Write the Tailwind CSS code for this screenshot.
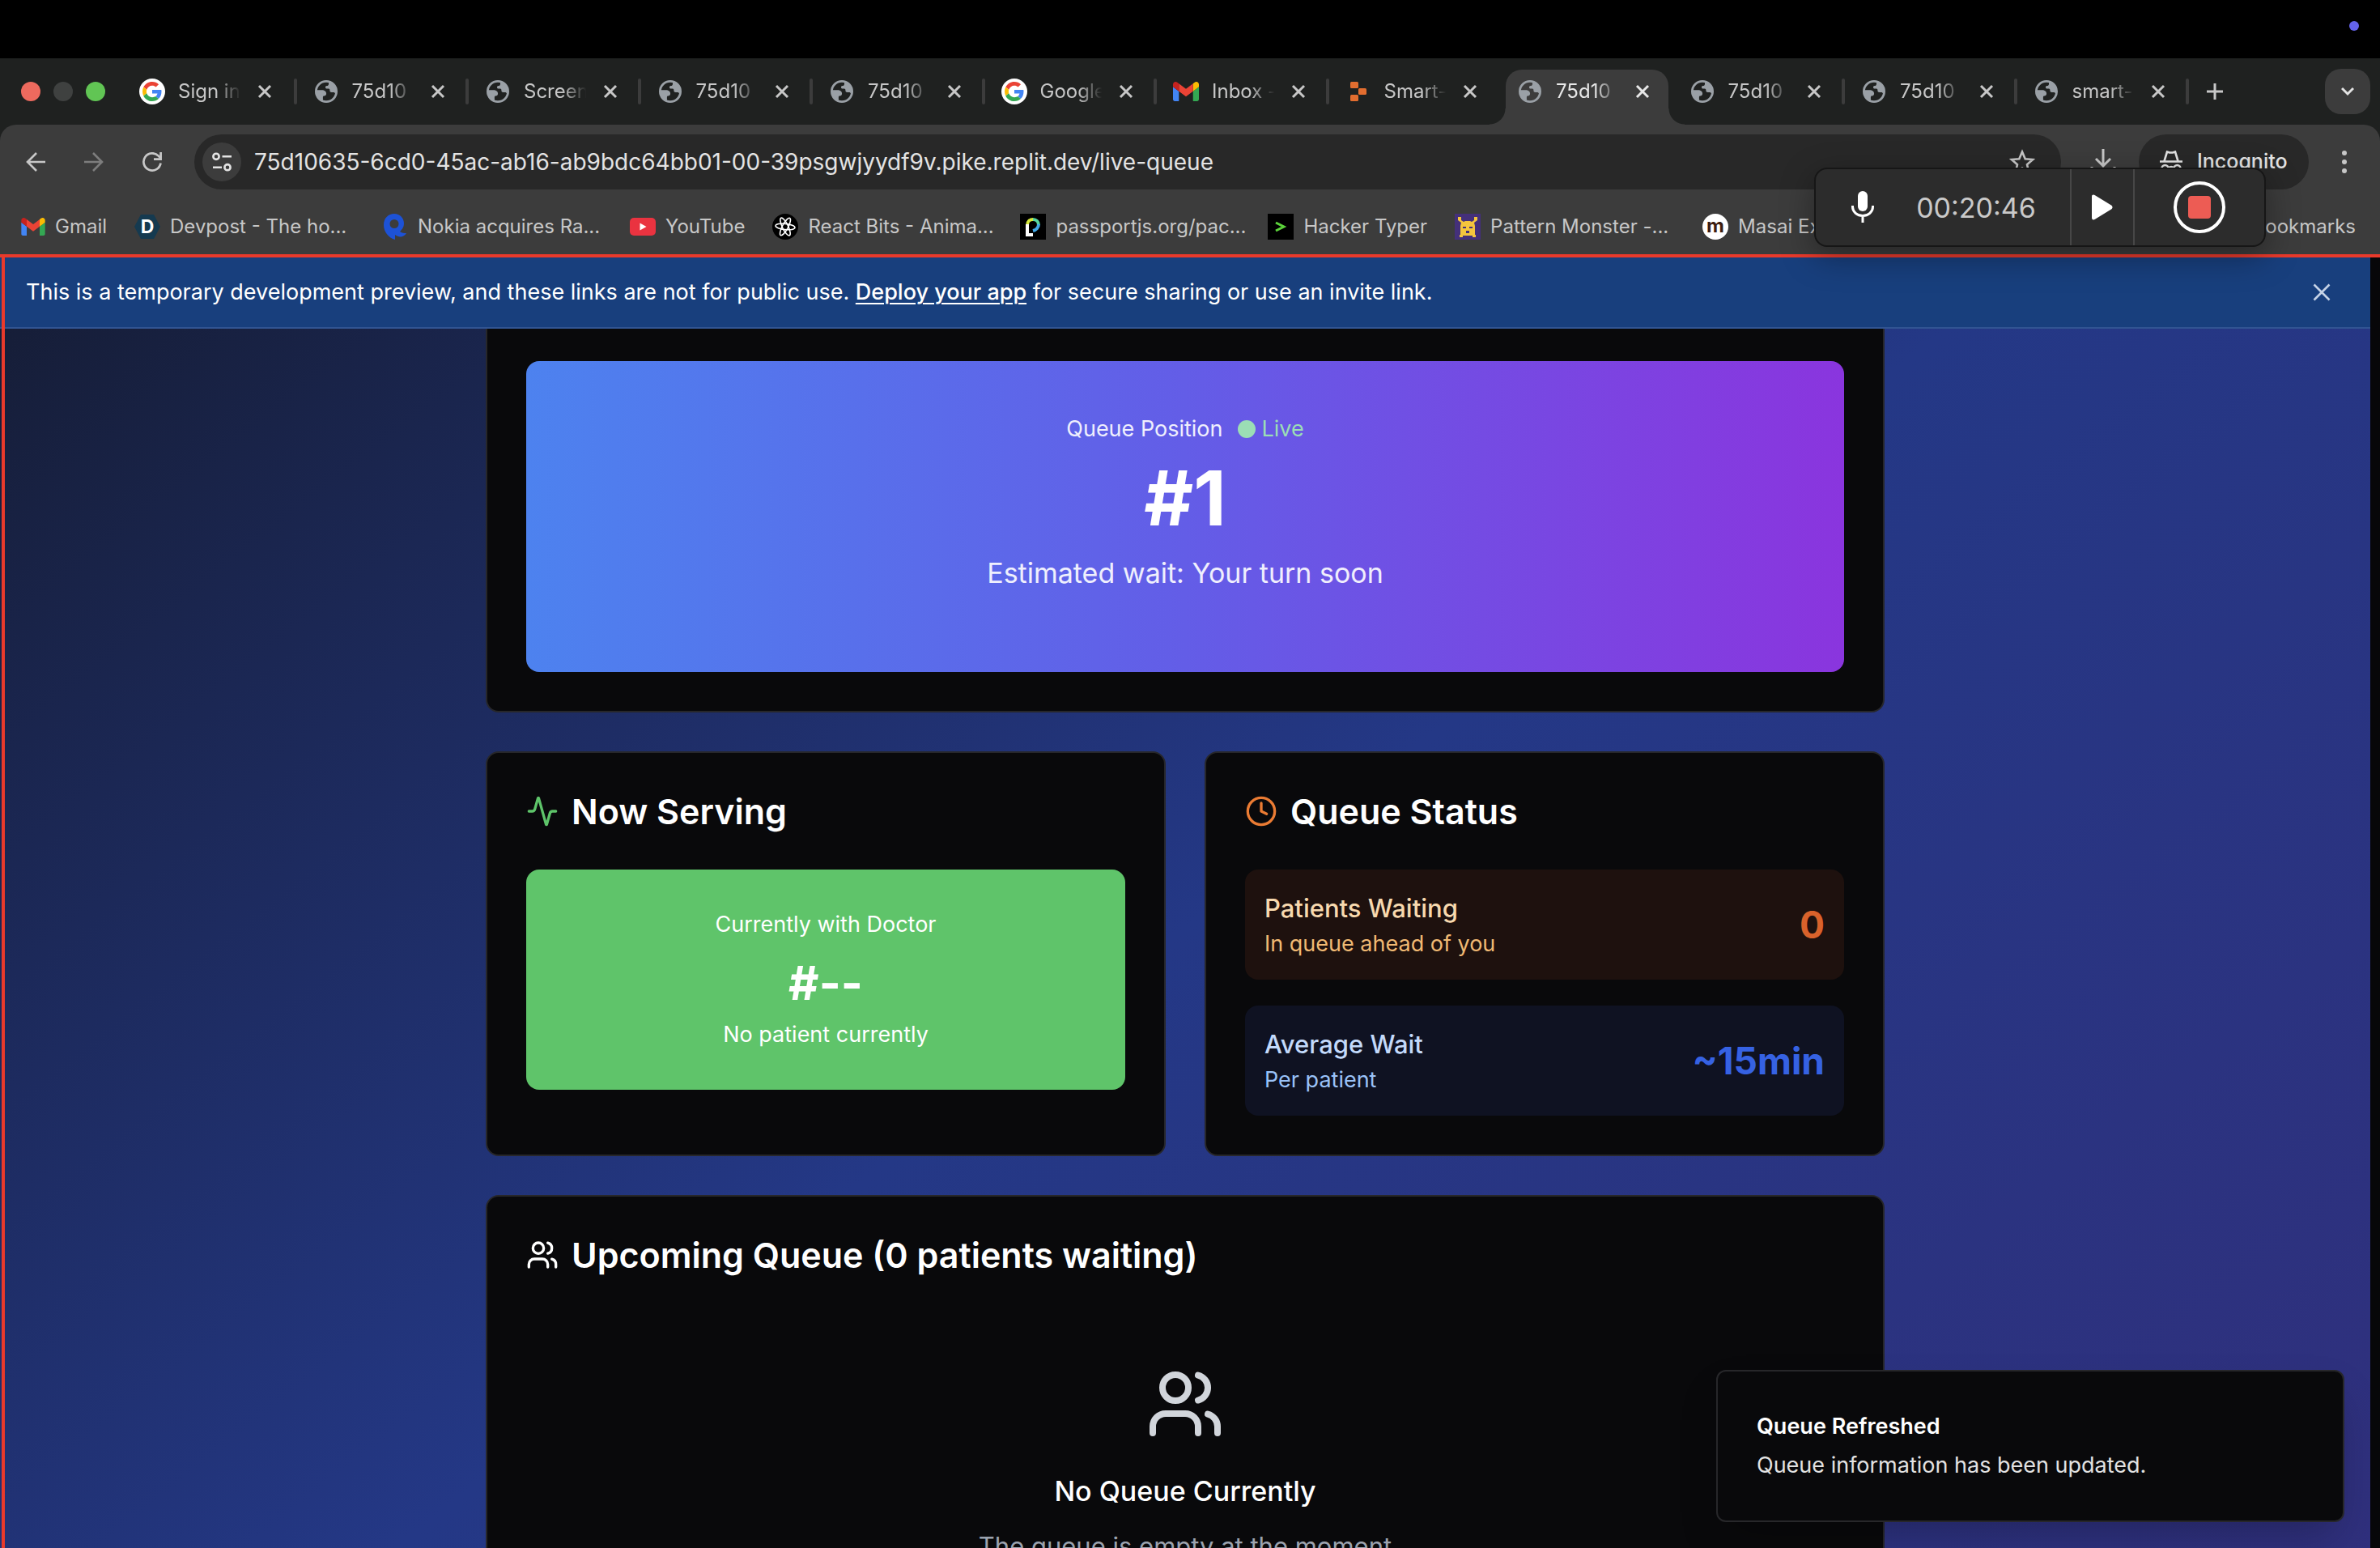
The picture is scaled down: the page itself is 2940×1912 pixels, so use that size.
<!DOCTYPE html>
<html lang="en">
<head>
<meta charset="utf-8">
<meta name="viewport" content="width=device-width, initial-scale=1">
<title>Live Queue</title>
<script src="https://cdn.jsdelivr.net/npm/@tailwindcss/browser@4"></script>
</head>
<body class="flex h-screen flex-col overflow-hidden bg-black font-['Inter','Liberation_Sans',sans-serif] text-white">

<!-- Shared icons -->
<svg class="hidden" aria-hidden="true">
  <symbol id="globe" viewBox="0 0 28 28">
    <circle cx="14" cy="14" r="12.6" fill="none" stroke="#9aa0a6" stroke-width="2.8"/>
    <path fill="#9aa0a6" d="M17 1.5v3.2c0 1.5-1 2.3-2.4 2.3-1.2 0-1.6.8-1.6 2 0 1.4 1 1.6 2.2 1.6h1.6c1.4 0 1.6 1 1.6 2.2 0 1.4.8 2.2 2.2 2.2h2.2c1 0 1.6.4 2 1.2l1.8-1.6C27 8 22.600 2.500 17 1.500z"/>
    <path fill="#9aa0a6" d="M1.500 12.200h7c3.400 0 5.600 1.800 5.600 4.400 0 2-1.200 2.800-2.800 2.800-1 0-1.400.6-1.400 1.600v4.800C4.500 24 1 19 1.500 12.200z"/>
  </symbol>
  <symbol id="google" viewBox="0 0 64 64">
    <circle cx="32" cy="32" r="32" fill="#fff"/>
    <g transform="translate(8 8)">
      <path fill="#ea4335" d="M24 9.500c3.540 0 6.710 1.220 9.210 3.600l6.850-6.850C35.900 2.380 30.470 0 24 0 14.620 0 6.510 5.380 2.560 13.220l7.980 6.190C12.430 13.720 17.740 9.500 24 9.500z"/>
      <path fill="#4285f4" d="M46.980 24.550c0-1.570-.15-3.090-.38-4.550H24v9.020h12.940c-.58 2.960-2.260 5.480-4.780 7.180l7.730 6c4.510-4.180 7.090-10.360 7.090-17.650z"/>
      <path fill="#fbbc05" d="M10.530 28.590c-.48-1.450-.76-2.990-.76-4.590s.27-3.140.76-4.590l-7.980-6.190C.92 16.460 0 20.120 0 24s.92 7.540 2.560 10.780l7.970-6.190z"/>
      <path fill="#34a853" d="M24 48c6.480 0 11.930-2.130 15.890-5.810l-7.730-6c-2.150 1.450-4.920 2.300-8.160 2.300-6.260 0-11.570-4.220-13.470-9.910l-7.980 6.190C6.510 42.620 14.620 48 24 48z"/>
    </g>
  </symbol>
  <symbol id="gmail" viewBox="52 42 88 66">
    <path fill="#4285f4" d="M58 108h14V74L52 59v43c0 3.320 2.690 6 6 6"/>
    <path fill="#34a853" d="M120 108h14c3.320 0 6-2.690 6-6V59l-20 15"/>
    <path fill="#fbbc04" d="M120 48v26l20-15v-8c0-7.420-8.470-11.650-14.400-7.200"/>
    <path fill="#ea4335" d="M72 74V48l24 18 24-18v26L96 92"/>
    <path fill="#c5221f" d="M52 51v8l20 15V48l-5.600-4.200c-5.940-4.450-14.400-.22-14.400 7.200"/>
  </symbol>
  <symbol id="close" viewBox="0 0 24 24">
    <path d="M5 5l14 14M19 5L5 19" fill="none" stroke="currentColor" stroke-width="3"/>
  </symbol>
  <symbol id="users" viewBox="0 0 24 24">
    <g fill="none" stroke="currentColor" stroke-width="2" stroke-linecap="round" stroke-linejoin="round">
      <path d="M16 21v-2a4 4 0 0 0-4-4H6a4 4 0 0 0-4 4v2"/>
      <circle cx="9" cy="7" r="4"/>
      <path d="M22 21v-2a4 4 0 0 0-3-3.870"/>
      <path d="M16 3.130a4 4 0 0 1 0 7.750"/>
    </g>
  </symbol>
</svg>

<!-- Menu bar -->
<div class="flex h-[72px] shrink-0 items-center justify-end bg-black pr-[26px]">
  <span class="mb-2 size-3 rounded-full bg-[#6463ea]"></span>
</div>

<!-- Tab strip -->
<header class="flex h-[82px] shrink-0 bg-[#1f2120] text-[24px] text-[#c7c7c7]">
  <div class="flex w-[152px] shrink-0 items-center gap-4 pl-[26px]">
    <button aria-label="Close window" class="size-6 rounded-full bg-[#ed6a5e]"></button>
    <button aria-label="Minimise window" class="size-6 rounded-full bg-[#3f4140]"></button>
    <button aria-label="Zoom window" class="size-6 rounded-full bg-[#61c554]"></button>
  </div>
  <nav aria-label="Tabs" class="flex min-w-0 flex-1">
    <div class="relative flex min-w-0 flex-1 items-center pr-[26px] pl-5">
      <svg class="size-8 shrink-0"><use href="#google"/></svg>
      <a href="#" class="ml-4 min-w-0 flex-1 overflow-hidden whitespace-nowrap [mask-image:linear-gradient(to_right,black_60%,transparent_98%)]">Sign in</a>
      <button aria-label="Close tab" class="ml-4 shrink-0"><svg class="size-6"><use href="#close"/></svg></button>
      <span class="absolute -right-0.5 h-8 w-1 rounded-full bg-[#3c3c3c]"></span>
    </div>
    <div class="relative flex min-w-0 flex-1 items-center pr-6 pl-[22px]">
      <span class="flex w-8 shrink-0 justify-center"><svg class="size-7"><use href="#globe"/></svg></span>
      <a href="#" class="ml-4 min-w-0 flex-1 overflow-hidden whitespace-nowrap [mask-image:linear-gradient(to_right,black_60%,transparent_98%)]">75d10</a>
      <button aria-label="Close tab" class="ml-4 shrink-0"><svg class="size-6"><use href="#close"/></svg></button>
      <span class="absolute -right-0.5 h-8 w-1 rounded-full bg-[#3c3c3c]"></span>
    </div>
    <div class="relative flex min-w-0 flex-1 items-center pr-6 pl-[22px]">
      <span class="flex w-8 shrink-0 justify-center"><svg class="size-7"><use href="#globe"/></svg></span>
      <a href="#" class="ml-4 min-w-0 flex-1 overflow-hidden whitespace-nowrap [mask-image:linear-gradient(to_right,black_60%,transparent_98%)]">Screen</a>
      <button aria-label="Close tab" class="ml-4 shrink-0"><svg class="size-6"><use href="#close"/></svg></button>
      <span class="absolute -right-0.5 h-8 w-1 rounded-full bg-[#3c3c3c]"></span>
    </div>
    <div class="relative flex min-w-0 flex-1 items-center pr-6 pl-[22px]">
      <span class="flex w-8 shrink-0 justify-center"><svg class="size-7"><use href="#globe"/></svg></span>
      <a href="#" class="ml-4 min-w-0 flex-1 overflow-hidden whitespace-nowrap [mask-image:linear-gradient(to_right,black_60%,transparent_98%)]">75d10</a>
      <button aria-label="Close tab" class="ml-4 shrink-0"><svg class="size-6"><use href="#close"/></svg></button>
      <span class="absolute -right-0.5 h-8 w-1 rounded-full bg-[#3c3c3c]"></span>
    </div>
    <div class="relative flex min-w-0 flex-1 items-center pr-6 pl-[22px]">
      <span class="flex w-8 shrink-0 justify-center"><svg class="size-7"><use href="#globe"/></svg></span>
      <a href="#" class="ml-4 min-w-0 flex-1 overflow-hidden whitespace-nowrap [mask-image:linear-gradient(to_right,black_60%,transparent_98%)]">75d10</a>
      <button aria-label="Close tab" class="ml-4 shrink-0"><svg class="size-6"><use href="#close"/></svg></button>
      <span class="absolute -right-0.5 h-8 w-1 rounded-full bg-[#3c3c3c]"></span>
    </div>
    <div class="relative flex min-w-0 flex-1 items-center pr-6 pl-[22px]">
      <svg class="size-8 shrink-0"><use href="#google"/></svg>
      <a href="#" class="ml-4 min-w-0 flex-1 overflow-hidden whitespace-nowrap [mask-image:linear-gradient(to_right,black_60%,transparent_98%)]">Google</a>
      <button aria-label="Close tab" class="ml-4 shrink-0"><svg class="size-6"><use href="#close"/></svg></button>
      <span class="absolute -right-0.5 h-8 w-1 rounded-full bg-[#3c3c3c]"></span>
    </div>
    <div class="relative flex min-w-0 flex-1 items-center pr-6 pl-[22px]">
      <svg class="h-6 w-8 shrink-0"><use href="#gmail"/></svg>
      <a href="#" class="ml-4 min-w-0 flex-1 overflow-hidden whitespace-nowrap [mask-image:linear-gradient(to_right,black_60%,transparent_98%)]">Inbox -</a>
      <button aria-label="Close tab" class="ml-4 shrink-0"><svg class="size-6"><use href="#close"/></svg></button>
      <span class="absolute -right-0.5 h-8 w-1 rounded-full bg-[#3c3c3c]"></span>
    </div>
    <div class="relative flex min-w-0 flex-1 items-center pr-6 pl-[22px]">
      <span class="flex w-8 shrink-0 justify-center"><svg class="h-6 w-5" viewBox="0 0 20 24" fill="#e26d2f"><rect width="10" height="8" rx="1.500"/><rect x="10" y="8" width="10" height="8" rx="1.500"/><rect y="16" width="10" height="8" rx="1.500"/></svg></span>
      <a href="#" class="ml-4 min-w-0 flex-1 overflow-hidden whitespace-nowrap [mask-image:linear-gradient(to_right,black_60%,transparent_98%)]">Smart-</a>
      <button aria-label="Close tab" class="ml-4 shrink-0"><svg class="size-6"><use href="#close"/></svg></button>
    </div>
    <div class="relative flex min-w-0 flex-1 items-center pr-6 pl-[22px] text-[#e8e8e8]">
      <span class="absolute top-[14px] right-1 bottom-0 left-2 rounded-t-[20px] bg-[#3c3c3c]"></span>
      <span class="absolute bottom-0 -left-3 size-5 bg-[radial-gradient(circle_at_0_0,transparent_19px,#3c3c3c_20px)]"></span>
      <span class="absolute -right-4 bottom-0 size-5 bg-[radial-gradient(circle_at_100%_0,transparent_19px,#3c3c3c_20px)]"></span>
      <span class="relative flex w-8 shrink-0 justify-center"><svg class="size-7"><use href="#globe"/></svg></span>
      <a href="#" aria-current="page" class="relative ml-4 min-w-0 flex-1 overflow-hidden whitespace-nowrap [mask-image:linear-gradient(to_right,black_60%,transparent_98%)]">75d10</a>
      <button aria-label="Close tab" class="relative ml-4 shrink-0"><svg class="size-6"><use href="#close"/></svg></button>
    </div>
    <div class="relative flex min-w-0 flex-1 items-center pr-6 pl-[22px]">
      <span class="flex w-8 shrink-0 justify-center"><svg class="size-7"><use href="#globe"/></svg></span>
      <a href="#" class="ml-4 min-w-0 flex-1 overflow-hidden whitespace-nowrap [mask-image:linear-gradient(to_right,black_60%,transparent_98%)]">75d10</a>
      <button aria-label="Close tab" class="ml-4 shrink-0"><svg class="size-6"><use href="#close"/></svg></button>
      <span class="absolute -right-0.5 h-8 w-1 rounded-full bg-[#3c3c3c]"></span>
    </div>
    <div class="relative flex min-w-0 flex-1 items-center pr-6 pl-[22px]">
      <span class="flex w-8 shrink-0 justify-center"><svg class="size-7"><use href="#globe"/></svg></span>
      <a href="#" class="ml-4 min-w-0 flex-1 overflow-hidden whitespace-nowrap [mask-image:linear-gradient(to_right,black_60%,transparent_98%)]">75d10</a>
      <button aria-label="Close tab" class="ml-4 shrink-0"><svg class="size-6"><use href="#close"/></svg></button>
      <span class="absolute -right-0.5 h-8 w-1 rounded-full bg-[#3c3c3c]"></span>
    </div>
    <div class="relative flex min-w-0 flex-1 items-center pr-6 pl-[22px]">
      <span class="flex w-8 shrink-0 justify-center"><svg class="size-7"><use href="#globe"/></svg></span>
      <a href="#" class="ml-4 min-w-0 flex-1 overflow-hidden whitespace-nowrap [mask-image:linear-gradient(to_right,black_60%,transparent_98%)]">smart-</a>
      <button aria-label="Close tab" class="ml-4 shrink-0"><svg class="size-6"><use href="#close"/></svg></button>
      <span class="absolute -right-0.5 h-8 w-1 rounded-full bg-[#3c3c3c]"></span>
    </div>
  </nav>
  <div class="flex w-[238px] shrink-0 items-center justify-between pr-3 pl-[10px]">
    <button aria-label="New tab" class="flex size-12 items-center justify-center"><svg class="size-5" viewBox="0 0 20 20" fill="none" stroke="currentColor" stroke-width="3"><path d="M10 0v20M0 10h20"/></svg></button>
    <button aria-label="Search tabs" class="flex size-14 items-center justify-center rounded-[20px] bg-[#3c3c3c]"><svg class="h-3 w-4" viewBox="0 0 16 12" fill="none" stroke="#e3e3e3" stroke-width="3"><path d="M1 2l7 7 7-7"/></svg></button>
  </div>
</header>

<!-- Toolbar and bookmarks -->
<div class="shrink-0 bg-[#1f2120]">
  <div class="rounded-t-[20px] bg-[#3c3c3c] text-[#c7c7c7]">
    <div class="flex items-center py-3 pr-5 pl-5">
      <button aria-label="Back" class="flex size-12 items-center justify-center"><svg class="size-6" viewBox="0 0 24 24" fill="none" stroke="currentColor" stroke-width="2.600"><path d="M24 12H2M13 1L2 12l11 11"/></svg></button>
      <button aria-label="Forward" class="ml-6 flex size-12 items-center justify-center text-[#7d7d7d]"><svg class="size-6" viewBox="0 0 24 24" fill="none" stroke="currentColor" stroke-width="2.600"><path d="M0 12h22M11 1l11 11-11 11"/></svg></button>
      <button aria-label="Reload" class="ml-6 flex size-12 items-center justify-center"><svg class="size-6" viewBox="0 0 24 24" fill="none" stroke="currentColor" stroke-width="2.700"><path d="M22.500 13.500A10.600 10.600 0 1 1 19.800 4.700L22 7"/><path d="M22.600 0v8.700H14" /></svg></button>
      <div class="ml-7 flex h-[68px] min-w-0 flex-1 items-center rounded-full bg-[#282828] pr-8 pl-[10px]">
        <button aria-label="View site information" class="flex size-12 shrink-0 items-center justify-center rounded-full bg-[#3c3c3c]"><svg class="size-6" viewBox="0 0 24 24" fill="none" stroke="#e3e3e3" stroke-width="2.600"><circle cx="5" cy="5.300" r="3.600"/><path d="M12.500 5.300H24M1 18.700h11"/><circle cx="19" cy="18.700" r="3.600"/></svg></button>
        <input aria-label="Address" type="text" value="75d10635-6cd0-45ac-ab16-ab9bdc64bb01-00-39psgwjyydf9v.pike.replit.dev/live-queue" class="ml-4 min-w-0 flex-1 bg-transparent text-[28px] text-[#e3e3e3] outline-none">
        <button aria-label="Bookmark this page" class="shrink-0"><svg class="size-8" viewBox="0 0 32 32" fill="none" stroke="currentColor" stroke-width="2.600"><path d="M16 3.500l3.700 8.700 9.400.8-7.100 6.200 2.100 9.200-8.100-4.900-8.100 4.900L10 19.200 2.900 13l9.400-.8z"/></svg></button>
      </div>
      <button aria-label="Downloads" class="ml-7 flex size-12 items-center justify-center"><svg class="size-8" viewBox="0 0 32 32" fill="none" stroke="currentColor" stroke-width="3"><path d="M16 0v20M7 12l9 9 9-9M2 22v6h28v-6"/></svg></button>
      <button class="ml-5 flex h-[68px] w-[210px] items-center rounded-full bg-[#282828] pl-[26px] text-[25px] font-medium text-[#e3e3e3]"><svg class="size-7" viewBox="0 0 28 28" fill="none" stroke="currentColor" stroke-width="2.600"><path d="M0 13.500h28M5.500 13L9 1.500l3 1h4l3-1L22.500 13"/><circle cx="6.500" cy="22" r="4"/><circle cx="21.500" cy="22" r="4"/><path d="M10.500 21.500c2-1.500 5-1.500 7 0"/></svg><span class="ml-[18px]">Incognito</span></button>
      <button aria-label="Menu" class="ml-5 flex size-12 items-center justify-center"><svg class="h-7 w-2" viewBox="0 0 8 28" fill="currentColor"><circle cx="4" cy="3" r="3"/><circle cx="4" cy="14" r="3"/><circle cx="4" cy="25" r="3"/></svg></button>
    </div>
    <nav aria-label="Bookmarks" class="flex h-[68px] items-center gap-[34px] pr-[30px] pl-[26px] text-[24px] whitespace-nowrap">
      <a href="#" class="flex items-center gap-3"><svg class="h-[22px] w-[30px]"><use href="#gmail"/></svg><span>Gmail</span></a>
      <a href="#" class="flex items-center gap-3"><svg class="size-8" viewBox="0 0 32 32"><path fill="#153a50" d="M8 1h16l8 15-8 15H8L0 16z"/><text x="16" y="24" font-size="23" font-weight="700" fill="#fff" text-anchor="middle">D</text></svg><span class="w-[228px]">Devpost - The ho...</span></a>
      <a href="#" class="flex items-center gap-3"><svg class="size-8" viewBox="0 0 32 32"><path fill="#1d52d6" fill-rule="evenodd" d="M15 0C22 0 27 5 27 12c0 5-3 8-5 10 3 2 5 2 8 2-3 5-9 6-14 2v6C8 30 2 22 2 14 2 5 8 0 15 0zm0 7a5.500 5.500 0 1 0 0 11 5.500 5.500 0 0 0 0-11z"/></svg><span class="w-[228px]">Nokia acquires Ra...</span></a>
      <a href="#" class="flex items-center gap-3"><svg class="h-[22px] w-8" viewBox="0 0 32 22"><rect width="32" height="22" rx="5" fill="#ea3340"/><path fill="#fff" d="M12.500 6.500v9l8-4.500z"/></svg><span>YouTube</span></a>
      <a href="#" class="flex items-center gap-3"><svg class="size-8" viewBox="0 0 32 32" fill="none" stroke="#fff" stroke-width="1.600"><circle cx="16" cy="16" r="16" fill="#000" stroke="none"/><ellipse cx="16" cy="16" rx="12" ry="3.600" transform="rotate(6 16 16)"/><ellipse cx="16" cy="16" rx="12" ry="3.600" transform="rotate(64 16 16)"/><ellipse cx="16" cy="16" rx="12" ry="3.600" transform="rotate(118 16 16)"/></svg><span class="w-[228px]">React Bits - Anima...</span></a>
      <a href="#" class="flex items-center gap-3"><svg class="size-8" viewBox="0 0 32 32" fill="none" stroke-width="4"><rect width="32" height="32" fill="#000"/><path stroke="#d5e93c" d="M9 14c0-4 3-7 7-7"/><path stroke="#56d6a0" d="M16 7c4 0 7 3 7 7"/><path stroke="#42a9e8" d="M23 13c0 4-3 7-7 8"/><path stroke="#fff" d="M9 13v13h7"/></svg><span class="w-[228px]">passportjs.org/pac...</span></a>
      <a href="#" class="flex items-center gap-3"><svg class="size-8" viewBox="0 0 32 32"><rect width="32" height="32" fill="#000"/><path d="M10 11l10 5-10 5" fill="none" stroke="#5bd23a" stroke-width="3"/></svg><span>Hacker Typer</span></a>
      <a href="#" class="flex items-center gap-3"><svg class="size-8" viewBox="0 0 32 32"><rect width="32" height="32" fill="#44307a"/><path fill="#f4c53d" d="M4 4h4v4l3 2 2-1h6l2 1 3-2V4h4v4l-4 3 1 4v11h1v3h-4v-2H10v2H6v-3h1V15l1-4-4-3z"/><path fill="#44307a" d="M10 16h4v2h-4zm8 0h4v2h-4zm-4 5h4v3h-4z"/></svg><span class="w-[228px]">Pattern Monster -...</span></a>
      <a href="#" class="flex items-center gap-3"><svg class="size-8" viewBox="0 0 32 32"><circle cx="16" cy="16" r="16" fill="#fff"/><text x="16" y="23" font-size="24" font-weight="700" fill="#3d1d10" text-anchor="middle">m</text></svg><span>Masai Ex</span></a>
      <a href="#" class="ml-auto">All Bookmarks</a>
    </nav>
  </div>
</div>

<!-- Web page -->
<div class="relative flex min-h-0 flex-1">
  <div class="relative flex min-w-0 flex-1 flex-col overflow-hidden bg-[linear-gradient(to_bottom_right,#131827,#243886_50%,#322e7b)] bg-[size:100%_2300px] bg-[position:0_-318px]">
    <div class="flex shrink-0 items-center justify-between border-t-4 border-b-2 border-t-[#e93a2b] border-b-[#315492] bg-[#183f7d] pr-[46px] pl-8">
      <p class="py-[23px] text-[27px] leading-10">This is a temporary development preview, and these links are not for public use. <a href="#" class="font-medium underline decoration-2 underline-offset-4">Deploy your app</a> for secure sharing or use an invite link.</p>
      <button aria-label="Dismiss" class="text-[#c5d2e6]"><svg class="size-7" viewBox="0 0 28 28" fill="none" stroke="currentColor" stroke-width="2.600"><path d="M4.500 4.500l19 19M23.500 4.500l-19 19"/></svg></button>
    </div>

    <main class="mx-auto flex w-full max-w-[1728px] min-h-0 flex-1 flex-col gap-12">
      <section class="shrink-0 rounded-b-2xl border-2 border-t-0 border-[#27272a] bg-[#09090b] px-12 pt-10 pb-12">
        <div class="rounded-2xl bg-[linear-gradient(to_right,#4d82ef,#635de7_50%,#8a35de)] px-16 pt-16 pb-[94px] text-center">
          <p class="flex items-center justify-center text-[27px] leading-10 text-white/90">Queue Position <span class="mr-2 ml-[18px] size-[22px] rounded-full bg-[#9bdeb5]"></span><span class="text-[#9bdeb5]">Live</span></p>
          <p class="mt-4 text-[94px] leading-[98px] font-bold">#1</p>
          <p class="mt-4 text-[34px] leading-14 text-white/90">Estimated wait: Your turn soon</p>
        </div>
      </section>

      <div class="grid shrink-0 grid-cols-2 gap-12">
        <section class="rounded-2xl border-2 border-[#27272a] bg-[#09090b] p-12">
          <h2 class="flex items-center gap-4 text-[43px] leading-12 font-semibold"><svg class="size-10 text-[#5ec46a]" viewBox="0 0 24 24" fill="none" stroke="currentColor" stroke-width="2" stroke-linecap="round" stroke-linejoin="round"><path d="M22 12h-2.480a2 2 0 0 0-1.930 1.460l-2.350 8.360a.25.25 0 0 1-.48 0L9.240 2.180a.25.25 0 0 0-.48 0l-2.350 8.360A2 2 0 0 1 4.490 12H2"/></svg>Now Serving</h2>
          <div class="mt-12 rounded-2xl bg-[#5fc46a] p-12 text-center">
            <p class="text-[27px] leading-10">Currently with Doctor</p>
            <p class="mt-4 text-[58px] leading-[72px] font-bold">#--</p>
            <p class="mt-2 text-[27px] leading-10">No patient currently</p>
          </div>
        </section>

        <section class="rounded-2xl border-2 border-[#27272a] bg-[#09090b] p-12">
          <h2 class="flex items-center gap-4 text-[43px] leading-12 font-semibold"><svg class="size-10 text-[#ea7b33]" viewBox="0 0 24 24" fill="none" stroke="currentColor" stroke-width="2" stroke-linecap="round" stroke-linejoin="round"><circle cx="12" cy="12" r="10"/><path d="M12 6v6l4 2"/></svg>Queue Status</h2>
          <div class="mt-12 flex items-center justify-between rounded-2xl bg-[#1e110e] p-6">
            <div>
              <p class="text-[31px] leading-12 font-medium text-[#f8d9ae]">Patients Waiting</p>
              <p class="text-[27px] leading-10 text-[#f0b973]">In queue ahead of you</p>
            </div>
            <p class="text-[46px] leading-16 font-bold text-[#d9622b]">0</p>
          </div>
          <div class="mt-8 flex items-center justify-between rounded-2xl bg-[#0f1222] p-6">
            <div>
              <p class="text-[31px] leading-12 font-medium text-[#c3dafb]">Average Wait</p>
              <p class="text-[27px] leading-10 text-[#9ac2f8]">Per patient</p>
            </div>
            <p class="text-[46px] leading-16 font-bold text-[#3662e3]">~15min</p>
          </div>
        </section>
      </div>

      <section class="shrink-0 rounded-2xl border-2 border-[#27272a] bg-[#09090b] p-12">
        <h2 class="flex items-center gap-4 text-[43px] leading-12 font-semibold"><svg class="size-10"><use href="#users"/></svg>Upcoming Queue (0 patients waiting)</h2>
        <div class="mt-12 flex flex-col items-center py-16">
          <svg class="size-24 text-[#d1d5db]"><use href="#users"/></svg>
          <h3 class="mt-8 text-[34px] leading-14 font-medium">No Queue Currently</h3>
          <p class="mt-4 text-[31px] leading-12 text-[#9ca3af]">The queue is empty at the moment</p>
        </div>
      </section>
    </main>

    <!-- Toast -->
    <div role="status" class="absolute right-8 bottom-8 w-[776px] rounded-xl border-2 border-[#27272a] bg-[#09090b] p-12 shadow-2xl">
      <p class="text-[27px] leading-10 font-semibold">Queue Refreshed</p>
      <p class="mt-2 text-[27px] leading-10 text-[#e2e2e2]">Queue information has been updated.</p>
    </div>
  </div>
  <div class="w-3 shrink-0 border-t-4 border-[#e93a2b] bg-[#070709]"></div>
  <span class="pointer-events-none absolute inset-y-0 left-0.5 w-1 bg-[#e93a2b]"></span>
</div>

<!-- Screen recorder -->
<div class="absolute top-[207px] right-[141px] flex h-[98px] w-[558px] rounded-2xl border-2 border-[#161616] bg-[#2c2c2c] shadow-[0_12px_40px_rgba(0,0,0,0.35)]">
  <div class="flex flex-1 items-center justify-center gap-[50px]">
    <svg class="h-10 w-8" viewBox="0 0 32 40" fill="none" stroke="#fff" stroke-width="3"><rect x="10" y="0" width="12" height="25" rx="6" fill="#fff" stroke="none"/><path d="M3.500 18v1.500a12.500 11 0 0 0 25 0V18M16 30v9"/></svg>
    <span class="text-[34px] text-[#c9c9c9]">00:20:46</span>
  </div>
  <button aria-label="Resume" class="flex w-20 items-center justify-center border-x-2 border-[#474747]"><svg class="h-8 w-[26px]" viewBox="0 0 26 32" fill="#fff"><path d="M0 3C0 .5 2 0 4 1.300l20 12.200c2 1.300 2 3.700 0 5L4 30.700C2 32 0 31.500 0 29z"/></svg></button>
  <button aria-label="Stop recording" class="flex w-[160px] items-center justify-center"><span class="flex size-16 items-center justify-center rounded-full border-4 border-white"><span class="size-7 rounded bg-[#ed5c54]"></span></span></button>
</div>

</body>
</html>
